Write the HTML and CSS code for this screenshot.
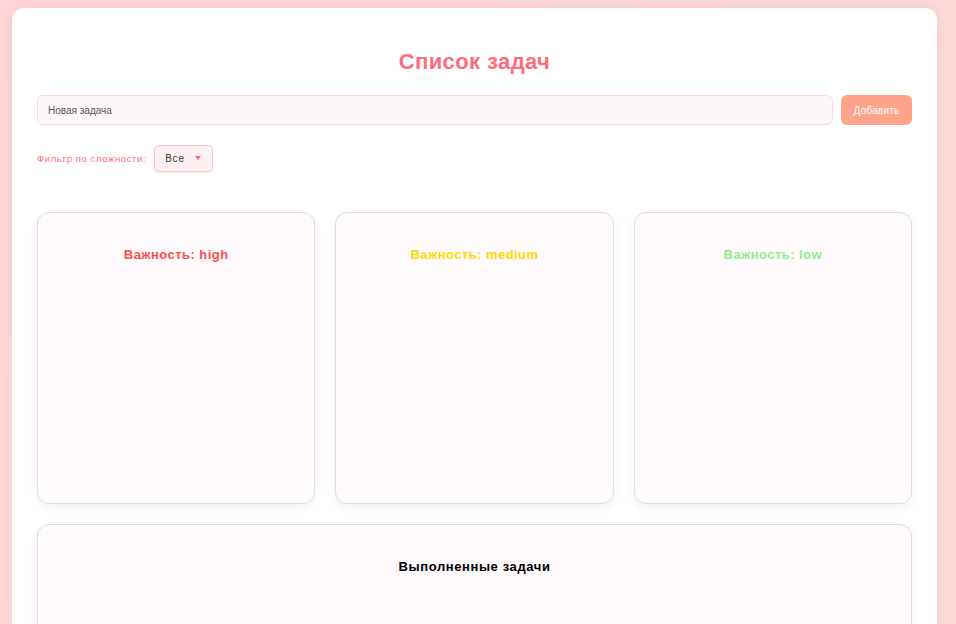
FILE: index.html
```html
<!DOCTYPE html>
<html lang="ru">
<head>
<meta charset="utf-8">
<title>Список задач</title>
<link rel="stylesheet" href="styles.css">
</head>
<body>
<div class="app">
  <h1 class="title">Список задач</h1>
  <div class="add-row">
    <input class="task-input" type="text" placeholder="Новая задача">
    <button class="add-btn">Добавить</button>
  </div>
  <div class="filter-row">
    <label class="filter-label">Фильтр по сложности:</label>
    <div class="select-wrap">
      <select class="filter-select">
        <option>Все</option>
        <option>high</option>
        <option>medium</option>
        <option>low</option>
      </select>
    </div>
  </div>
  <div class="columns">
    <div class="card"><h3 class="card-title high">Важность: high</h3></div>
    <div class="card"><h3 class="card-title medium">Важность: medium</h3></div>
    <div class="card"><h3 class="card-title low">Важность: low</h3></div>
  </div>
  <div class="card done">
    <h3 class="card-title done-title">Выполненные задачи</h3>
  </div>
</div>
</body>
</html>
```
FILE: styles.css
```css
* { box-sizing: border-box; }
html, body { margin: 0; }
body {
  font-family: "Liberation Sans", Arial, sans-serif;
  background: linear-gradient(135deg, #ffd6d9 0%, #fbdcd6 100%);
  min-height: 100vh;
  padding: 8px 19px 0 12px;
}
.app {
  background: #ffffff;
  border-radius: 12px;
  padding: 41px 25px 30px 25px;
  box-shadow: 0 0 14px rgba(230, 150, 150, 0.25);
}
.title {
  margin: 0 0 20px 0;
  text-align: center;
  font-size: 22px;
  line-height: 26px;
  letter-spacing: 0.4px;
  color: #ff6b7a;
  font-weight: bold;
}
.add-row {
  display: flex;
  gap: 8px;
}
.task-input {
  flex: 1;
  height: 30px;
  border: 1px solid #fdd6e2;
  background: #fff8fa;
  border-radius: 6px;
  padding: 0 10px;
  font-family: "Liberation Sans", Arial, sans-serif;
  font-size: 10px;
  color: #444;
  outline: none;
}
.task-input::placeholder { color: #555; }
.add-btn {
  width: 71px;
  height: 30px;
  border: none;
  border-radius: 6px;
  background: #ffa38a;
  color: #fff;
  font-family: "Liberation Sans", Arial, sans-serif;
  font-size: 10px;
  letter-spacing: 0.2px;
}
.filter-row {
  display: flex;
  align-items: center;
  gap: 8px;
  margin-top: 20px;
}
.filter-label {
  font-size: 9.5px;
  letter-spacing: 0.6px;
  color: #ff6b7a;
}
.select-wrap {
  position: relative;
}
.select-wrap::after {
  content: "";
  position: absolute;
  right: 12px;
  top: 11px;
  border-left: 3.5px solid transparent;
  border-right: 3.5px solid transparent;
  border-top: 4px solid #ff6b7a;
  pointer-events: none;
}
.filter-select {
  appearance: none;
  -webkit-appearance: none;
  width: 59px;
  height: 27px;
  border: 1px solid #ffc2cb;
  background: #fff1f3;
  border-radius: 5px;
  padding: 0 10px;
  font-family: "Liberation Sans", Arial, sans-serif;
  font-size: 10px;
  letter-spacing: 0.8px;
  color: #333;
  box-shadow: 0 1px 3px rgba(255, 150, 160, 0.25);
}
.columns {
  display: grid;
  grid-template-columns: repeat(3, 1fr);
  gap: 20px;
  margin-top: 40px;
}
.card {
  background: #fffbfc;
  border: 1px solid #dddddd;
  border-radius: 12px;
  min-height: 292px;
  padding: 33px 20px 20px;
  box-shadow: 0 4px 10px rgba(0, 0, 0, 0.05);
}
.card-title {
  margin: 0;
  text-align: center;
  font-size: 13px;
  line-height: 18px;
  letter-spacing: 0.45px;
  font-weight: bold;
}
.high { color: #ff4d4f; }
.medium { color: #ffd700; }
.low { color: #90ee90; }
.done {
  margin-top: 20px;
  min-height: 200px;
}
.done-title { color: #000; letter-spacing: 0.6px; }
```
